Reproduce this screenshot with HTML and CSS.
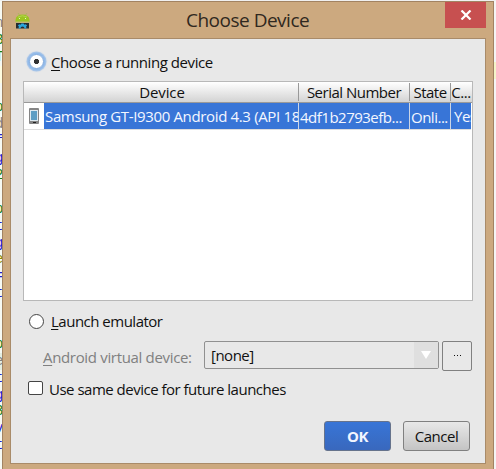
FILE: index.html
```html
<!DOCTYPE html>
<html lang="en">
<head>
<meta charset="utf-8">
<title>Choose Device</title>
<link rel="stylesheet" href="styles.css">
</head>
<body>
<div class="editor">
  <div class="code">
    <span></span><span class="gray">n</span><span class="green">B</span><span class="green">T</span><span class="current"></span><span></span><span class="green">p</span><span class="gray">d</span><span>f</span><span>g</span><span class="green">2</span><span></span><span class="green">p</span><span>t</span><span>g</span><span class="olive">e</span><span>=</span><span>t</span><span></span><span></span><span class="green">p</span><span class="gray tint">e</span><span>t</span><span>g</span><span class="green">3</span><span>v</span><span>t</span><span></span>
  </div>
  <main class="window">
    <header class="titlebar">
      <svg class="android" viewBox="0 0 15 17" width="15" height="17">
        <path d="M3 1l2 3M12 1l-2 3" stroke="#a4b95b" stroke-width=".8"/>
        <path d="M.5 10V8Q1 2.500 7.500 2.500T14.500 8V10z" fill="#9cc522"/>
        <path d="M3 5Q7.500 2.500 12 5" stroke="#b5d455" fill="none"/>
        <path d="M4 6.500h1M10 6.500h1" stroke="#e9f3c7"/>
        <path d="M.5 9.500h14v1h-14z" fill="#b8bd70"/>
        <path d="M1 11h13v5.500H1z" fill="#262d30"/>
        <path d="M3.500 16.500l.4-2-1-1 1.300-1.200 1.300.5.900-1.300h2.200l.9 1.300 1.300-.5 1.300 1.200-1 1 .4 2H9.500a2 2 0 0 0-4 0z" fill="#2aa5db"/>
      </svg>
      <h1>Choose Device</h1>
      <button class="close" aria-label="Close"><svg viewBox="0 0 12 10" width="12" height="10"><path d="M1.500.5l9 9M10.500.5l-9 9" stroke="#fff" stroke-width="2.200"/></svg></button>
    </header>
    <section class="content">
      <label class="option running"><span class="radio selected"></span><span class="t t-running"><u>C</u>hoose a running device</span></label>
      <div class="table">
        <div class="row head">
          <div><span class="t t-device">Device</span></div><div><span class="t">Serial Number</span></div><div><span class="t">State</span></div><div><span class="t">C...</span></div>
        </div>
        <div class="row body">
          <div class="name">
            <span class="icon"><svg viewBox="0 0 10 16" width="10" height="16"><rect width="10" height="16" rx="1" fill="#858585"/><rect x="1" y="2" width="8" height="11" fill="#dce9f0"/><rect x="2" y="3" width="6" height="9" fill="#5d9ec4"/><path d="M4 14h3v1H4z" fill="#222"/></svg></span>
            <span class="t t-samsung">Samsung GT-I9300 Android 4.3 (API 18)</span>
          </div>
          <div><span class="t t-number">4df1b2793efb...</span></div><div><span class="t t-number">Onli...</span></div><div><span class="t">Yes</span></div>
        </div>
      </div>
      <label class="option emulator"><span class="radio"></span><span class="t"><u>L</u>aunch emulator</span></label>
      <div class="avd">
        <span class="t t-avd"><u>A</u>ndroid virtual device:</span>
        <div class="select"><span class="t">[none]</span><span class="arrow"><svg viewBox="0 0 10 8" width="10" height="8"><path d="M0 0h10L5 8z" fill="#fff"/></svg></span></div>
        <button class="more" aria-label="More"><i></i><i></i><i></i></button>
      </div>
      <label class="option same"><span class="check"></span><span class="t">Use same device for future launches</span></label>
      <footer><button class="btn ok"><span class="t">OK</span></button><button class="btn"><span class="t">Cancel</span></button></footer>
    </section>
  </main>
  <div class="margin"></div>
</div>
</body>
</html>
```
FILE: styles.css
```css
* { box-sizing: border-box; }
body { margin: 0; width: 496px; height: 469px; overflow: hidden; background: #f0f0f0; font: 15px/20px "Open Sans", "Noto Sans", sans-serif; color: #111; }
button { font: inherit; color: inherit; padding: 0; margin: 0; border: 0; }
svg { display: block; flex: none; }
u { text-decoration-thickness: 1px; text-underline-offset: 2px; }
.t { white-space: nowrap; flex: none; letter-spacing: -.5px; }
.t-running { letter-spacing: -.43px; margin-top: -2px; }
.t-device { letter-spacing: -.1px; padding-left: 2px; }
.t-samsung { letter-spacing: -.35px; }
.t-number { padding-top: 2px; }
.editor { display: flex; height: 469px; padding-top: 1px; }
.code { width: 2px; overflow: hidden; font: 14px/17px "Liberation Mono", monospace; color: #2020d0; background: #f6f9f3; }
.code span { display: block; height: 16.9px; text-indent: -5px; white-space: nowrap; }
.code span:first-child { height: 14px; }
.code .green { color: #168016; }
.code .gray { color: #808080; }
.code .olive { color: #8a8a00; }
.code .current { background: #fffde0; }
.code .tint { background: #e4eee2; }
.margin { flex: 1; background: linear-gradient(#f4f4f4 61px, #f5f5c8 61px, #f5f5c8 78px, #f4f4f4 78px); }
.window { width: 492px; height: 480px; background: #cca97f; border: 1px solid #a28362; padding: 0 7px; }
.titlebar { height: 36px; display: flex; align-items: flex-start; padding: 0 0 0 5px; }
.android { margin-top: 10px; }
.titlebar h1 { flex: 1; margin: 5px 0 0; padding-left: 156px; font-size: 19px; letter-spacing: -.5px; line-height: 26px; font-weight: 400; color: #302820; white-space: nowrap; }
.close { width: 41px; height: 26px; background: #c75050; display: flex; justify-content: center; padding-top: 8px; }
.content { height: 426px; background: #e8e8e8; border: 1px solid #a98b69; padding: 12px 12px 0; }
.option { display: flex; align-items: center; }
.radio { width: 15px; height: 15px; border: 1px solid #444; border-radius: 50%; background: #fff; }
.radio.selected { border-color: #7faade; box-shadow: 0 0 0 1px #8fb9ea, 0 0 1px 2.500px #9dbfe8; background: radial-gradient(circle, #333 0 2.300px, #fff 2.900px); margin-top: -2px; }
.running { height: 23px; padding-left: 6px; gap: 7px; }
.table { margin-top: 7px; width: 450px; height: 220px; border: 1px solid #b8b8b8; background: #fff; }
.row { display: grid; grid-template-columns: 275px 111px 41px 20px; }
.row > div { overflow: hidden; display: flex; align-items: center; }
.head { height: 21px; background: linear-gradient(#fff, #d3d3d3); border-bottom: 1px solid #999; }
.head > div { justify-content: center; border-right: 1px solid #999; margin: 1px 0; }
.head > div:last-child, .body > div:last-child { border-right: 0; }
.body { width: 447px; height: 27px; border-bottom: 1px solid #ddd; color: #f4f7ff; background: #3875d7; }
.body > div { border-right: 1px solid #cbd5e5; padding-left: 1px; }
.body > .name { padding: 0; }
.icon { width: 20px; height: 26px; flex: none; background: #fff; padding: 5px 0 0 5px; margin-right: 1px; }
.body > div:last-child { padding-left: 3px; }
.emulator { margin-top: 9px; height: 22px; padding-left: 6px; gap: 7px; }
.avd { margin-top: 9px; height: 30px; display: flex; align-items: flex-start; padding-left: 20px; color: #808080; }
.t-avd { width: 161px; padding-top: 6px; letter-spacing: -.33px; }
.select { width: 235px; height: 28px; border: 1px solid #909090; border-radius: 2px; color: #111; display: flex; justify-content: space-between; align-items: center; padding-left: 6px; }
.arrow { width: 24px; height: 26px; background: #dfdfdf; padding: 9px 0 0 7px; }
.more { width: 30px; height: 30px; margin-left: 3px; border: 1px solid #808080; border-radius: 2px; background: #e8e8e8; display: flex; gap: 2px; align-items: center; justify-content: center; padding-bottom: 1px; }
.more i { width: 1px; height: 1px; background: #111; }
.same { margin-top: 7px; height: 22px; padding-left: 5px; gap: 6px; }
.check { width: 15px; height: 14px; border: 1px solid #444; border-radius: 2px; background: #fff; margin-top: -3px; }
footer { margin-top: 21px; display: flex; gap: 12px; justify-content: flex-end; padding-right: 3px; }
.btn { width: 67px; height: 30px; border: 1px solid #808080; border-radius: 3px; background: linear-gradient(#e8e8e8, #c4c4c4); }
.ok { background: linear-gradient(#3875d7, #3968bd); color: #f2f5ff; font-weight: 700; border-color: #66738c; }
```
